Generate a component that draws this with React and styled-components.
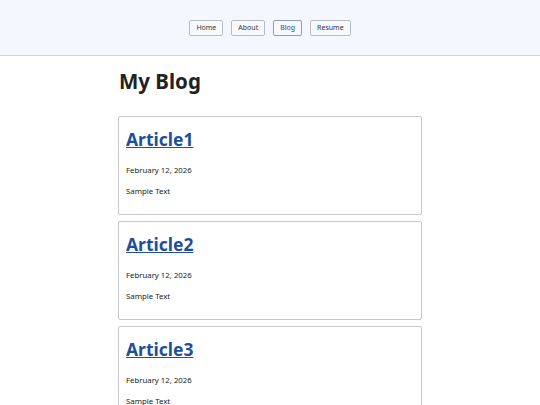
import React from 'react';
import styled, { createGlobalStyle } from 'styled-components';

const GlobalStyle = createGlobalStyle`
  body {
    margin: 0;
    font-family: "Noto Sans", "Open Sans", sans-serif;
    color: #222;
    background: #fff;
  }
`;

const TopBar = styled.header`
  background: #f4f7fd;
  border-bottom: 1px solid #cfd2d8;
  height: 56px;
  box-sizing: border-box;
  display: flex;
  justify-content: center;
  align-items: center;
  gap: 8px;
`;

const NavButton = styled.button`
  font-family: inherit;
  font-size: 7px;
  height: 16px;
  padding: 0 6px;
  background: #f8f9fc;
  border: 1px solid ${props => (props.active ? '#8b9dc2' : '#b9bdc6')};
  border-radius: 2px;
  color: ${props => (props.active ? '#2d4f8f' : '#333')};
  cursor: pointer;
`;

const Main = styled.main`
  width: 304px;
  margin: 0 auto;
`;

const Title = styled.h1`
  font-size: 20.5px;
  font-weight: 700;
  margin: 12px 0 22px 1px;
  line-height: 26px;
`;

const Card = styled.article`
  border: 1px solid #c8c8c8;
  border-radius: 2px;
  padding: 10px 7px 0;
  height: 99px;
  box-sizing: border-box;
  margin-bottom: 6px;
`;

const ArticleLink = styled.a`
  display: inline-block;
  font-size: 17.5px;
  font-weight: 700;
  color: #1d4f9c;
  text-decoration: underline;
  line-height: 24px;
`;

const Meta = styled.p`
  font-size: 7.8px;
  margin: 14px 0 0;
  line-height: 10px;
`;

const Body = styled.p`
  font-size: 7.8px;
  margin: 11px 0 0;
  line-height: 10px;
`;

const links = ['Home', 'About', 'Blog', 'Resume'];
const posts = ['Article1', 'Article2', 'Article3'];

export default function App() {
  return (
    <>
      <GlobalStyle />
      <TopBar>
        {links.map(l => (
          <NavButton key={l} active={l === 'Blog'}>
            {l}
          </NavButton>
        ))}
      </TopBar>
      <Main>
        <Title>My Blog</Title>
        {posts.map(p => (
          <Card key={p}>
            <ArticleLink href="#">{p}</ArticleLink>
            <Meta>February 12, 2026</Meta>
            <Body>Sample Text</Body>
          </Card>
        ))}
      </Main>
    </>
  );
}
